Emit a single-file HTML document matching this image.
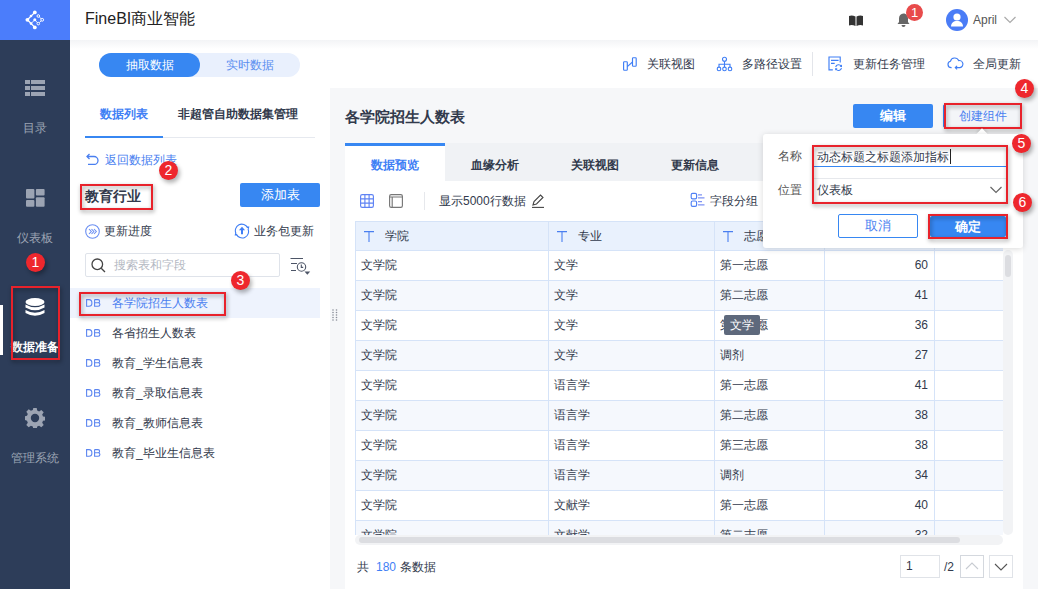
<!DOCTYPE html>
<html><head><meta charset="utf-8">
<style>
*{margin:0;padding:0;box-sizing:border-box}
html,body{width:1038px;height:589px;overflow:hidden;background:#fff;font-family:"Liberation Sans",sans-serif;font-size:12px;color:#323a4c}
.a{position:absolute;white-space:nowrap}
#side{left:0;top:0;width:70px;height:589px;background:#2d3d59}
#logo{left:0;top:0;width:70px;height:40px;background:#4b7dfb}
.sl{color:#9ca4b3;font-size:12px;width:70px;text-align:center;left:0;line-height:14px}
#hdr{left:70px;top:0;width:968px;height:40px;background:#fff}
#shadow{left:70px;top:40px;width:968px;height:9px;background:linear-gradient(#f3f4f6,#fff)}
#rp{left:330px;top:88px;width:708px;height:501px;background:#f6f7f9}
#card{left:345px;top:180px;width:678px;height:409px;background:#fff}
.badge{width:19px;height:19px;border-radius:50%;background:#ee272d;color:#fff;font-size:14px;text-align:center;line-height:19px;box-shadow:2px 3px 4px rgba(0,0,0,.3)}
.rbox{border:2px solid #e8222b;filter:drop-shadow(1px 2px 2px rgba(0,0,0,.4))}
.btn{background:#3787f2;color:#fff;text-align:center;border-radius:2px}
.t12{font-size:12px;line-height:14px}
.j{display:inline-block;text-align-last:justify;text-align:justify;white-space:nowrap}.tofu .k{font-size:1.333em;-webkit-text-stroke:0.28px currentColor}</style></head><body>
<div id="side" class="a"></div>
<div id="logo" class="a">
<svg width="70" height="40" viewBox="0 0 70 40">
<g stroke="#fff" stroke-width="1.3" fill="none">
<path d="M34.8 12.4 L27.4 19.8 L34.8 27.4"></path>
</g>
<g stroke="#fff" stroke-width="0.9" fill="none">
<path d="M31 23.6 L34.8 19.8 L37.3 22.6 M39.3 22.6 L41.2 20.8 M41.2 18.8 L39.3 17"></path>
</g>
<g fill="#fff">
<circle cx="34.8" cy="12.4" r="1.9"></circle><circle cx="27.4" cy="19.8" r="1.9"></circle><circle cx="34.8" cy="27.4" r="1.9"></circle>
<circle cx="34.8" cy="19.8" r="1.5"></circle><circle cx="31" cy="16" r="1.3"></circle><circle cx="31" cy="23.6" r="1.3"></circle>
</g>
<g fill="none" stroke="#fff" stroke-width="1">
<circle cx="38.3" cy="16" r="1.3"></circle><circle cx="42.2" cy="19.8" r="1.4"></circle><circle cx="38.3" cy="23.6" r="1.3"></circle>
</g>
</svg>
</div>
<!-- sidebar items -->
<svg class="a" style="left:25px;top:80px" width="20" height="16" viewBox="0 0 20 16">
<g fill="#9ca4b3"><rect x="0" y="0" width="5" height="4"></rect><rect x="6" y="0" width="14" height="4"></rect>
<rect x="0" y="6" width="5" height="4"></rect><rect x="6" y="6" width="14" height="4"></rect>
<rect x="0" y="12" width="5" height="4"></rect><rect x="6" y="12" width="14" height="4"></rect></g></svg>
<div class="a sl" style="top:121px"><span class="j" style="width: 24px;"><span class="k">目录</span></span></div>
<svg class="a" style="left:26px;top:189px" width="19" height="18" viewBox="0 0 19 18">
<g fill="#9ca4b3"><rect x="0" y="0" width="8.4" height="9.6" rx="1"></rect><rect x="9.9" y="0" width="8.7" height="6.6" rx="1"></rect>
<rect x="0" y="11.1" width="8.4" height="6.7" rx="1"></rect><rect x="9.9" y="8.3" width="8.7" height="9.5" rx="1"></rect></g></svg>
<div class="a sl" style="top:231px"><span class="j" style="width: 36px;"><span class="k">仪表板</span></span></div>
<div class="a badge" style="left:26px;top:253px">1</div>
<div class="a" style="left:0;top:305px;width:3px;height:50px;background:#fff"></div>
<svg class="a" style="left:25px;top:298px" width="20" height="20" viewBox="0 0 20 20">
<g fill="#fff"><ellipse cx="10" cy="4" rx="9.5" ry="4"></ellipse>
<path d="M0.5 6.5 Q10 12 19.5 6.5 L19.5 9.5 Q10 15 0.5 9.5Z"></path>
<path d="M0.5 12 Q10 17.5 19.5 12 L19.5 15 Q10 20.5 0.5 15Z"></path></g></svg>
<div class="a sl" style="top:340px;color:#fff;font-weight:bold"><span class="j" style="width: 48px;"><span class="k">数据准备</span></span></div>
<div class="a rbox" style="left:11px;top:286px;width:49px;height:74px"></div>
<svg class="a" style="left:25px;top:408px" width="20" height="20" viewBox="0 0 20 20">
<path fill="#9ca4b3" fill-rule="evenodd" d="M8.3 0h3.4l.5 2.6 1.9.8 2.2-1.5 2.4 2.4-1.5 2.2.8 1.9 2.6.5v3.4l-2.6.5-.8 1.9 1.5 2.2-2.4 2.4-2.2-1.5-1.9.8-.5 2.6H8.3l-.5-2.6-1.9-.8-2.2 1.5-2.4-2.4 1.5-2.2-.8-1.9L-.6 11.7V8.3l2.6-.5.8-1.9-1.5-2.2 2.4-2.4 2.2 1.5 1.9-.8z M10 5.8a4.2 4.2 0 1 0 0 8.4a4.2 4.2 0 1 0 0-8.4z"></path></svg>
<div class="a sl" style="top:451px"><span class="j" style="width: 48px;"><span class="k">管理系统</span></span></div>

<div id="hdr" class="a"></div>
<div id="shadow" class="a"></div>
<div id="rp" class="a"></div>
<div id="card" class="a"></div>

<!-- header -->
<div class="a" style="left:85px;top:10px;font-size:16px;line-height:18px;color:#222"><span class="j" style="width: 110.25px;">FineBI<span class="k">商业智能</span></span></div>
<svg class="a" style="left:849px;top:15px" width="14" height="11" viewBox="0 0 14 11">
<path fill="#333" d="M0 1 Q3 0 6.5 1.5 L6.5 11 Q3 9.5 0 10.5Z M7.5 1.5 Q11 0 14 1 L14 10.5 Q11 9.5 7.5 11Z"></path></svg>
<svg class="a" style="left:897px;top:13px" width="13" height="14" viewBox="0 0 13 14">
<path fill="#666" d="M6.5 0.5c-2.8 0-4.5 2.2-4.5 4.8v3.7L0.5 11h12L11 9V5.3C11 2.7 9.3 0.5 6.5 0.5z M4.5 12h4a2 2 0 0 1-4 0z"></path></svg>
<div class="a" style="left:906px;top:4px;width:17px;height:17px;border-radius:50%;background:#e84b4b;color:#fff;font-size:13px;line-height:17px;text-align:center">1</div>
<div class="a" style="left:946px;top:9px;width:22px;height:22px;border-radius:50%;background:#4a7cf6"></div>
<svg class="a" style="left:946px;top:9px" width="22" height="22" viewBox="0 0 22 22">
<g fill="#fff"><circle cx="11" cy="8" r="3.6"></circle><path d="M5 17.5c0-3.5 2.5-5.5 6-5.5s6 2 6 5.5z"></path></g></svg>
<div class="a" style="left:973px;top:13px;font-size:12px;line-height:14px;color:#555">April</div>
<svg class="a" style="left:1004px;top:16px" width="12" height="8" viewBox="0 0 12 8"><path d="M0.5 1 L6 6.5 L11.5 1" fill="none" stroke="#aaa" stroke-width="1.2"></path></svg>

<!-- toolbar -->
<div class="a" style="left:99px;top:53px;width:201px;height:24px;border-radius:12px;background:#e9f0fd"></div>
<div class="a" style="left:99px;top:53px;width:101px;height:24px;border-radius:12px;background:#3787f2;color:#fff;text-align:center;line-height:24px"><span class="j" style="width: 48px;"><span class="k">抽取数据</span></span></div>
<div class="a" style="left:200px;top:53px;width:100px;height:24px;color:#5b8ff0;text-align:center;line-height:24px"><span class="j" style="width: 48px;"><span class="k">实时数据</span></span></div>

<svg class="a" style="left:622px;top:56px" width="16" height="16" viewBox="0 0 16 16"><g fill="none" stroke="#3f7ef5" stroke-width="1.15"><rect x="1.6" y="5.7" width="3.7" height="8.5" rx="0.7"></rect><rect x="10.5" y="1.7" width="3.7" height="8.5" rx="0.7"></rect><path d="M5.3 10.6 L10.5 6"></path></g></svg>
<div class="a t12" style="left:647px;top:57px;color:#323a4c"><span class="j" style="width: 48px;"><span class="k">关联视图</span></span></div>
<svg class="a" style="left:716px;top:56px" width="17" height="16" viewBox="0 0 17 16"><g fill="none" stroke="#3f7ef5" stroke-width="1.1"><circle cx="8.5" cy="3.3" r="2"></circle><circle cx="3" cy="12.9" r="1.8"></circle><circle cx="8.5" cy="12.9" r="1.8"></circle><circle cx="14" cy="12.9" r="1.8"></circle><path d="M8.5 5.3V11.1 M3 11.1V8.3H14V11.1"></path></g></svg>
<div class="a t12" style="left:742px;top:57px;color:#323a4c"><span class="j" style="width: 60px;"><span class="k">多路径设置</span></span></div>
<div class="a" style="left:812px;top:52px;width:1px;height:24px;background:#e3e5ea"></div>
<svg class="a" style="left:827px;top:55px" width="17" height="17" viewBox="0 0 17 17"><g fill="none" stroke="#3f7ef5" stroke-width="1.15"><path d="M5.8 14.8H2V2H13.2V7.6"></path><path d="M4 5.4H11.6 M4 8.4H7.7"></path><path d="M8.7 12 A3 3 0 0 1 14.2 11.2 M14.5 13.2 A3 3 0 0 1 9 14"></path></g><path d="M15 9.6 L15 12.2 L12.6 11.6Z M8.2 15.6 L8.2 13 L10.6 13.6Z" fill="#3f7ef5"></path></svg>
<div class="a t12" style="left:853px;top:57px;color:#323a4c"><span class="j" style="width: 72px;"><span class="k">更新任务管理</span></span></div>
<svg class="a" style="left:947px;top:56px" width="18" height="15" viewBox="0 0 18 15"><g fill="none" stroke="#3f7ef5" stroke-width="1.15"><path d="M4.6 11.6H4.2A3.2 3.2 0 0 1 3.4 5.3A4.4 4.4 0 0 1 11.7 4.6A3.4 3.4 0 0 1 13 11.6H8.4"></path><path d="M10.1 9.8L8.3 11.6L10.1 13.4"></path></g></svg>
<div class="a t12" style="left:973px;top:57px;color:#323a4c"><span class="j" style="width: 48px;"><span class="k">全局更新</span></span></div>

<!-- left panel -->
<div class="a t12" style="left:100px;top:107px;color:#3f80f5;font-weight:bold"><span class="j" style="width: 48px;"><span class="k">数据列表</span></span></div>
<div class="a t12" style="left:178px;top:107px;color:#323a4c;font-weight:bold"><span class="j" style="width: 120px;"><span class="k">非超管自助数据集管理</span></span></div>
<div class="a" style="left:85px;top:137px;width:230px;height:1px;background:#e6e9ef"></div>
<div class="a" style="left:85px;top:136px;width:78px;height:2px;background:#3787f2"></div>
<svg class="a" style="left:86px;top:153px" width="13" height="12" viewBox="0 0 13 12"><g fill="none" stroke="#4a7ff0" stroke-width="1.3"><path d="M3.5 1L1 3.5 3.5 6"></path><path d="M1 3.5H8a4 4 0 0 1 0 8H2"></path></g></svg>
<div class="a t12" style="left:105px;top:153px;color:#4a7ff0"><span class="j" style="width: 72px;"><span class="k">返回数据列表</span></span></div>
<div class="a" style="left:85px;top:188px;font-size:14px;line-height:16px;font-weight:bold;color:#323a4c"><span class="j" style="width: 56px;"><span class="k">教育行业</span></span></div>
<div class="a btn" style="left:240px;top:183px;width:80px;height:24px;line-height:24px;font-size:13px"><span class="j" style="width: 39px;"><span class="k">添加表</span></span></div>
<svg class="a" style="left:85px;top:224px" width="15" height="15" viewBox="0 0 15 15"><g fill="none" stroke="#6b8ff2" stroke-width="1.1"><circle cx="7.5" cy="7.5" r="6.8"></circle><path d="M4 5l2.3 2.5L4 10 M6.5 5l2.3 2.5L6.5 10 M9 5l2.3 2.5L9 10"></path></g></svg>
<div class="a t12" style="left:104px;top:224px;color:#323a4c"><span class="j" style="width: 48px;"><span class="k">更新进度</span></span></div>
<svg class="a" style="left:234px;top:223px" width="16" height="16" viewBox="0 0 16 16"><g fill="none" stroke="#3f7ef5" stroke-width="1.1"><path d="M2 10.5A6.3 6.3 0 0 1 13.6 4.8 M14 6A6.3 6.3 0 0 1 2.4 11.2"></path></g><path d="M12.4 3.4L14.6 6.6 15.4 3.6Z M3.6 12.6L1.4 9.4 0.6 12.4Z" fill="#3f7ef5"></path><path d="M8 3.8L4.9 7.2H7V11.2H9V7.2H11.1Z" fill="#3f7ef5"></path></svg>
<div class="a t12" style="left:254px;top:224px;color:#323a4c"><span class="j" style="width: 60px;"><span class="k">业务包更新</span></span></div>
<div class="a" style="left:85px;top:253px;width:195px;height:24px;border:1px solid #dfe3ea;border-radius:2px"></div>
<svg class="a" style="left:91px;top:258px" width="15" height="15" viewBox="0 0 15 15"><g fill="none" stroke="#444" stroke-width="1.3"><circle cx="6.3" cy="6.3" r="5.3"></circle><path d="M10.2 10.2L14 14"></path></g></svg>
<div class="a t12" style="left:114px;top:258px;color:#b3b8c2"><span class="j" style="width: 72px;"><span class="k">搜索表和字段</span></span></div>
<svg class="a" style="left:290px;top:257px" width="21" height="19" viewBox="0 0 21 19"><g fill="none" stroke="#4d5567" stroke-width="1.1"><path d="M0.5 1.5H13 M1 6.5H7 M1 13.5H6"></path><circle cx="11.5" cy="10" r="4.2"></circle><path d="M11.3 7.6V10.4H13.2"></path></g><path d="M14.5 14.5H20.2L17.35 17.8Z" fill="#4d5567"></path></svg>

<div class="a" style="left:70px;top:288px;width:250px;height:30px;background:#eef3fd"></div>
<svg class="a" style="left:86px;top:299px" width="15" height="8" viewBox="0 0 15 8"><path d="M0.6 0.6H3Q5.9 0.6 5.9 3.9Q5.9 7.2 3 7.2H0.6Z M8.6 0.6H12Q13.6 0.6 13.6 2.2Q13.6 3.8 12 3.8H8.6 M8.6 3.8H12.2Q13.9 3.8 13.9 5.5Q13.9 7.2 12.2 7.2H8.6V0.6" fill="none" stroke="#5b85f0" stroke-width="1.1"></path></svg>
<div class="a t12" style="left:112px;top:296px;color:#4a7ff0"><span class="j" style="width: 96px;"><span class="k">各学院招生人数表</span></span></div>
<svg class="a" style="left:86px;top:329px" width="15" height="8" viewBox="0 0 15 8"><path d="M0.6 0.6H3Q5.9 0.6 5.9 3.9Q5.9 7.2 3 7.2H0.6Z M8.6 0.6H12Q13.6 0.6 13.6 2.2Q13.6 3.8 12 3.8H8.6 M8.6 3.8H12.2Q13.9 3.8 13.9 5.5Q13.9 7.2 12.2 7.2H8.6V0.6" fill="none" stroke="#5b85f0" stroke-width="1.1"></path></svg>
<div class="a t12" style="left:112px;top:326px;color:#323a4c"><span class="j" style="width: 84px;"><span class="k">各省招生人数表</span></span></div>
<svg class="a" style="left:86px;top:359px" width="15" height="8" viewBox="0 0 15 8"><path d="M0.6 0.6H3Q5.9 0.6 5.9 3.9Q5.9 7.2 3 7.2H0.6Z M8.6 0.6H12Q13.6 0.6 13.6 2.2Q13.6 3.8 12 3.8H8.6 M8.6 3.8H12.2Q13.9 3.8 13.9 5.5Q13.9 7.2 12.2 7.2H8.6V0.6" fill="none" stroke="#5b85f0" stroke-width="1.1"></path></svg>
<div class="a t12" style="left:112px;top:356px;color:#323a4c"><span class="j" style="width: 90.69px;"><span class="k">教育</span>_<span class="k">学生信息表</span></span></div>
<svg class="a" style="left:86px;top:389px" width="15" height="8" viewBox="0 0 15 8"><path d="M0.6 0.6H3Q5.9 0.6 5.9 3.9Q5.9 7.2 3 7.2H0.6Z M8.6 0.6H12Q13.6 0.6 13.6 2.2Q13.6 3.8 12 3.8H8.6 M8.6 3.8H12.2Q13.9 3.8 13.9 5.5Q13.9 7.2 12.2 7.2H8.6V0.6" fill="none" stroke="#5b85f0" stroke-width="1.1"></path></svg>
<div class="a t12" style="left:112px;top:386px;color:#323a4c"><span class="j" style="width: 90.69px;"><span class="k">教育</span>_<span class="k">录取信息表</span></span></div>
<svg class="a" style="left:86px;top:419px" width="15" height="8" viewBox="0 0 15 8"><path d="M0.6 0.6H3Q5.9 0.6 5.9 3.9Q5.9 7.2 3 7.2H0.6Z M8.6 0.6H12Q13.6 0.6 13.6 2.2Q13.6 3.8 12 3.8H8.6 M8.6 3.8H12.2Q13.9 3.8 13.9 5.5Q13.9 7.2 12.2 7.2H8.6V0.6" fill="none" stroke="#5b85f0" stroke-width="1.1"></path></svg>
<div class="a t12" style="left:112px;top:416px;color:#323a4c"><span class="j" style="width: 90.69px;"><span class="k">教育</span>_<span class="k">教师信息表</span></span></div>
<svg class="a" style="left:86px;top:449px" width="15" height="8" viewBox="0 0 15 8"><path d="M0.6 0.6H3Q5.9 0.6 5.9 3.9Q5.9 7.2 3 7.2H0.6Z M8.6 0.6H12Q13.6 0.6 13.6 2.2Q13.6 3.8 12 3.8H8.6 M8.6 3.8H12.2Q13.9 3.8 13.9 5.5Q13.9 7.2 12.2 7.2H8.6V0.6" fill="none" stroke="#5b85f0" stroke-width="1.1"></path></svg>
<div class="a t12" style="left:112px;top:446px;color:#323a4c"><span class="j" style="width: 102.69px;"><span class="k">教育</span>_<span class="k">毕业生信息表</span></span></div>
<div class="a rbox" style="left:79px;top:292px;width:147px;height:24px"></div>
<div class="a badge" style="left:159px;top:161px">2</div>
<div class="a badge" style="left:231px;top:271px">3</div>
<div class="a rbox" style="left:80px;top:184px;width:73px;height:26px"></div>
<svg class="a" style="left:332px;top:309px" width="6" height="12" viewBox="0 0 6 12"><g fill="#8a8f99"><circle cx="1" cy="1" r=".8"></circle><circle cx="4.5" cy="1" r=".8"></circle><circle cx="1" cy="3.5" r=".8"></circle><circle cx="4.5" cy="3.5" r=".8"></circle><circle cx="1" cy="6" r=".8"></circle><circle cx="4.5" cy="6" r=".8"></circle><circle cx="1" cy="8.5" r=".8"></circle><circle cx="4.5" cy="8.5" r=".8"></circle><circle cx="1" cy="11" r=".8"></circle><circle cx="4.5" cy="11" r=".8"></circle></g></svg>

<!-- right panel -->
<div class="a" style="left:345px;top:108px;font-size:15px;line-height:17px;font-weight:bold;color:#323a4c"><span class="j" style="width: 120px;"><span class="k">各学院招生人数表</span></span></div>
<div class="a btn" style="left:853px;top:104px;width:80px;height:24px;line-height:24px;font-size:13px;font-weight:bold"><span class="j" style="width: 26px;"><span class="k">编辑</span></span></div>
<div class="a" style="left:943px;top:104px;width:79px;height:24px;border:1px solid #3787f2;border-radius:2px;background:#f3f5f8;color:#4a7ff0;text-align:center;line-height:22px;font-size:12px"><span class="j" style="width: 48px;"><span class="k">创建组件</span></span></div>
<div class="a rbox" style="left:944px;top:103px;width:78px;height:26px"></div>
<div class="a badge" style="left:1015px;top:79px">4</div>

<div class="a" style="left:345px;top:143px;width:678px;height:38px;background:#f0f2f5"></div>
<div class="a" style="left:345px;top:143px;width:100px;height:38px;background:#fff;border-top:3px solid #3787f2"></div>
<div class="a t12" style="left:345px;top:158px;width:100px;text-align:center;color:#3f80f5;font-weight:bold"><span class="j" style="width: 48px;"><span class="k">数据预览</span></span></div>
<div class="a t12" style="left:445px;top:158px;width:100px;text-align:center;color:#323a4c;font-weight:bold"><span class="j" style="width: 48px;"><span class="k">血缘分析</span></span></div>
<div class="a t12" style="left:545px;top:158px;width:100px;text-align:center;color:#323a4c;font-weight:bold"><span class="j" style="width: 48px;"><span class="k">关联视图</span></span></div>
<div class="a t12" style="left:645px;top:158px;width:100px;text-align:center;color:#323a4c;font-weight:bold"><span class="j" style="width: 48px;"><span class="k">更新信息</span></span></div>

<svg class="a" style="left:360px;top:194px" width="14" height="14" viewBox="0 0 14 14"><g fill="none" stroke="#5f83f4" stroke-width="1.15"><rect x="0.6" y="0.6" width="12.8" height="12.8" rx="1.6"></rect><path d="M4.9 0.5V13.5 M9.1 0.5V13.5 M0.5 4.9H13.5 M0.5 9.1H13.5"></path></g></svg>
<svg class="a" style="left:389px;top:194px" width="14" height="14" viewBox="0 0 14 14"><g fill="none" stroke="#777" stroke-width="1.15"><rect x="0.6" y="0.6" width="12.8" height="12.8" rx="1.6"></rect><path d="M0.5 3H13.5 M3.2 3V13.5"></path></g></svg>
<div class="a" style="left:424px;top:192px;width:1px;height:18px;background:#e6e8ec"></div>
<div class="a t12" style="left:439px;top:194px;color:#323a4c"><span class="j" style="width: 86.7px;"><span class="k">显示</span>5000<span class="k">行数据</span></span></div>
<svg class="a" style="left:531px;top:194px" width="14" height="14" viewBox="0 0 14 14"><g fill="none" stroke="#444" stroke-width="1.1"><path d="M2 11L3 7.5 9.5 1 12 3.5 5.5 10z"></path><path d="M1 13.4H13"></path></g></svg>
<svg class="a" style="left:690px;top:192px" width="16" height="16" viewBox="0 0 16 16"><g fill="none" stroke="#4f80f5" stroke-width="1.15"><rect x="1.2" y="1.4" width="5.4" height="5.4" rx="1.4"></rect><rect x="1.2" y="9" width="5.4" height="5.4" rx="1.4"></rect></g><g stroke="#7f93f3" stroke-width="1.3"><path d="M8 2.8H12 M8 5.9H14.5 M8 9.6H12 M8 12.8H14.5"></path></g></svg>
<div class="a t12" style="left:710px;top:194px;color:#323a4c"><span class="j" style="width: 48px;"><span class="k">字段分组</span></span></div>

<div class="a" style="left:355px;top:221px;width:648px;height:29px;background:#e9f1fd;border-top:1px solid #d5e3f8;border-left:1px solid #d5e3f8"></div>
<svg class="a" style="left:364px;top:231px" width="10" height="11" viewBox="0 0 10 11"><path d="M0 .6H10 M5 .6V11" stroke="#4a7ff0" stroke-width="1.1" fill="none"></path></svg>
<div class="a t12" style="left:385px;top:229px;color:#323a4c"><span class="j" style="width: 24px;"><span class="k">学院</span></span></div>
<svg class="a" style="left:557px;top:231px" width="10" height="11" viewBox="0 0 10 11"><path d="M0 .6H10 M5 .6V11" stroke="#4a7ff0" stroke-width="1.1" fill="none"></path></svg>
<div class="a t12" style="left:578px;top:229px;color:#323a4c"><span class="j" style="width: 24px;"><span class="k">专业</span></span></div>
<svg class="a" style="left:723px;top:231px" width="10" height="11" viewBox="0 0 10 11"><path d="M0 .6H10 M5 .6V11" stroke="#4a7ff0" stroke-width="1.1" fill="none"></path></svg>
<div class="a t12" style="left:744px;top:229px;color:#323a4c"><span class="j" style="width: 24px;"><span class="k">志愿</span></span></div>
<div class="a" style="left:355px;top:250px;width:648px;height:285px;overflow:hidden">
<div class="a" style="left:0;top:0px;width:648px;height:30px;background:#fff;border-top:1px solid #d5e3f8"></div>
<div class="a t12" style="left:6px;top:8px"><span class="j" style="width: 36px;"><span class="k">文学院</span></span></div>
<div class="a t12" style="left:199px;top:8px"><span class="j" style="width: 24px;"><span class="k">文学</span></span></div>
<div class="a t12" style="left:365px;top:8px"><span class="j" style="width: 48px;"><span class="k">第一志愿</span></span></div>
<div class="a t12" style="left:469px;top:8px;width:104px;text-align:right">60</div>
<div class="a" style="left:0;top:30px;width:648px;height:30px;background:#f5f8fd;border-top:1px solid #d5e3f8"></div>
<div class="a t12" style="left:6px;top:38px"><span class="j" style="width: 36px;"><span class="k">文学院</span></span></div>
<div class="a t12" style="left:199px;top:38px"><span class="j" style="width: 24px;"><span class="k">文学</span></span></div>
<div class="a t12" style="left:365px;top:38px"><span class="j" style="width: 48px;"><span class="k">第二志愿</span></span></div>
<div class="a t12" style="left:469px;top:38px;width:104px;text-align:right">41</div>
<div class="a" style="left:0;top:60px;width:648px;height:30px;background:#fff;border-top:1px solid #d5e3f8"></div>
<div class="a t12" style="left:6px;top:68px"><span class="j" style="width: 36px;"><span class="k">文学院</span></span></div>
<div class="a t12" style="left:199px;top:68px"><span class="j" style="width: 24px;"><span class="k">文学</span></span></div>
<div class="a t12" style="left:365px;top:68px"><span class="j" style="width: 48px;"><span class="k">第三志愿</span></span></div>
<div class="a t12" style="left:469px;top:68px;width:104px;text-align:right">36</div>
<div class="a" style="left:0;top:90px;width:648px;height:30px;background:#f5f8fd;border-top:1px solid #d5e3f8"></div>
<div class="a t12" style="left:6px;top:98px"><span class="j" style="width: 36px;"><span class="k">文学院</span></span></div>
<div class="a t12" style="left:199px;top:98px"><span class="j" style="width: 24px;"><span class="k">文学</span></span></div>
<div class="a t12" style="left:365px;top:98px"><span class="j" style="width: 24px;"><span class="k">调剂</span></span></div>
<div class="a t12" style="left:469px;top:98px;width:104px;text-align:right">27</div>
<div class="a" style="left:0;top:120px;width:648px;height:30px;background:#fff;border-top:1px solid #d5e3f8"></div>
<div class="a t12" style="left:6px;top:128px"><span class="j" style="width: 36px;"><span class="k">文学院</span></span></div>
<div class="a t12" style="left:199px;top:128px"><span class="j" style="width: 36px;"><span class="k">语言学</span></span></div>
<div class="a t12" style="left:365px;top:128px"><span class="j" style="width: 48px;"><span class="k">第一志愿</span></span></div>
<div class="a t12" style="left:469px;top:128px;width:104px;text-align:right">41</div>
<div class="a" style="left:0;top:150px;width:648px;height:30px;background:#f5f8fd;border-top:1px solid #d5e3f8"></div>
<div class="a t12" style="left:6px;top:158px"><span class="j" style="width: 36px;"><span class="k">文学院</span></span></div>
<div class="a t12" style="left:199px;top:158px"><span class="j" style="width: 36px;"><span class="k">语言学</span></span></div>
<div class="a t12" style="left:365px;top:158px"><span class="j" style="width: 48px;"><span class="k">第二志愿</span></span></div>
<div class="a t12" style="left:469px;top:158px;width:104px;text-align:right">38</div>
<div class="a" style="left:0;top:180px;width:648px;height:30px;background:#fff;border-top:1px solid #d5e3f8"></div>
<div class="a t12" style="left:6px;top:188px"><span class="j" style="width: 36px;"><span class="k">文学院</span></span></div>
<div class="a t12" style="left:199px;top:188px"><span class="j" style="width: 36px;"><span class="k">语言学</span></span></div>
<div class="a t12" style="left:365px;top:188px"><span class="j" style="width: 48px;"><span class="k">第三志愿</span></span></div>
<div class="a t12" style="left:469px;top:188px;width:104px;text-align:right">38</div>
<div class="a" style="left:0;top:210px;width:648px;height:30px;background:#f5f8fd;border-top:1px solid #d5e3f8"></div>
<div class="a t12" style="left:6px;top:218px"><span class="j" style="width: 36px;"><span class="k">文学院</span></span></div>
<div class="a t12" style="left:199px;top:218px"><span class="j" style="width: 36px;"><span class="k">语言学</span></span></div>
<div class="a t12" style="left:365px;top:218px"><span class="j" style="width: 24px;"><span class="k">调剂</span></span></div>
<div class="a t12" style="left:469px;top:218px;width:104px;text-align:right">34</div>
<div class="a" style="left:0;top:240px;width:648px;height:30px;background:#fff;border-top:1px solid #d5e3f8"></div>
<div class="a t12" style="left:6px;top:248px"><span class="j" style="width: 36px;"><span class="k">文学院</span></span></div>
<div class="a t12" style="left:199px;top:248px"><span class="j" style="width: 36px;"><span class="k">文献学</span></span></div>
<div class="a t12" style="left:365px;top:248px"><span class="j" style="width: 48px;"><span class="k">第一志愿</span></span></div>
<div class="a t12" style="left:469px;top:248px;width:104px;text-align:right">40</div>
<div class="a" style="left:0;top:270px;width:648px;height:30px;background:#f5f8fd;border-top:1px solid #d5e3f8"></div>
<div class="a t12" style="left:6px;top:278px"><span class="j" style="width: 36px;"><span class="k">文学院</span></span></div>
<div class="a t12" style="left:199px;top:278px"><span class="j" style="width: 36px;"><span class="k">文献学</span></span></div>
<div class="a t12" style="left:365px;top:278px"><span class="j" style="width: 48px;"><span class="k">第二志愿</span></span></div>
<div class="a t12" style="left:469px;top:278px;width:104px;text-align:right">32</div>
<div class="a" style="left:0px;top:0;width:1px;height:300px;background:#d5e3f8"></div>
<div class="a" style="left:193px;top:0;width:1px;height:300px;background:#d5e3f8"></div>
<div class="a" style="left:359px;top:0;width:1px;height:300px;background:#d5e3f8"></div>
<div class="a" style="left:469px;top:0;width:1px;height:300px;background:#d5e3f8"></div>
<div class="a" style="left:579px;top:0;width:1px;height:300px;background:#d5e3f8"></div>
</div>
<div class="a" style="left:548px;top:221px;width:1px;height:29px;background:#d5e3f8"></div>
<div class="a" style="left:714px;top:221px;width:1px;height:29px;background:#d5e3f8"></div>
<div class="a" style="left:824px;top:221px;width:1px;height:29px;background:#d5e3f8"></div>
<div class="a" style="left:934px;top:221px;width:1px;height:29px;background:#d5e3f8"></div>

<div class="a" style="left:1003px;top:250px;width:10px;height:285px;background:#f2f3f5;border-radius:5px"></div>
<div class="a" style="left:1005px;top:255px;width:6px;height:22px;background:#dcdde1;border-radius:3px"></div>
<div class="a" style="left:355px;top:535px;width:648px;height:10px;background:#f2f3f5;border-radius:5px"></div>
<div class="a" style="left:359px;top:537px;width:601px;height:6px;background:#dcdde1;border-radius:3px"></div>

<div class="a t12" style="left:357px;top:560px;color:#323a4c"><span class="j" style="width: 12px;"><span class="k">共</span></span></div><div class="a t12" style="left:376px;top:560px;color:#3f80f5">180</div><div class="a t12" style="left:400px;top:560px;color:#323a4c"><span class="j" style="width: 36px;"><span class="k">条数据</span></span></div>
<div class="a" style="left:900px;top:555px;width:40px;height:23px;border:1px solid #e0e3e8;font-size:12px;line-height:21px;padding-left:5px;color:#323a4c">1</div>
<div class="a t12" style="left:944px;top:560px;color:#323a4c">/2</div>
<div class="a" style="left:960px;top:555px;width:24px;height:23px;border:1px solid #d4d8de"></div>
<svg class="a" style="left:965px;top:562px" width="14" height="8" viewBox="0 0 14 8"><path d="M1 7L7 1 13 7" fill="none" stroke="#c8ccd2" stroke-width="1.1"></path></svg>
<div class="a" style="left:989px;top:555px;width:24px;height:23px;border:1px solid #e0e3e8"></div>
<svg class="a" style="left:994px;top:563px" width="14" height="8" viewBox="0 0 14 8"><path d="M1 1L7 7 13 1" fill="none" stroke="#555" stroke-width="1.1"></path></svg>

<div class="a" style="left:724px;top:315px;width:36px;height:20px;background:#5e697c;border-radius:2px;color:#fff;text-align:center;line-height:20px;font-size:12px"><span class="j" style="width: 24px;"><span class="k">文学</span></span></div>

<!-- popup -->
<div class="a" style="left:978px;top:130px;width:8px;height:8px;background:#fff;transform:rotate(45deg);box-shadow:-1px -1px 3px rgba(0,0,0,.12)"></div>
<div class="a" style="left:763px;top:134px;width:260px;height:114px;background:#fff;border-radius:3px;box-shadow:0 1px 6px rgba(0,0,0,.15)"></div>
<div class="a t12" style="left:778px;top:149px;color:#555"><span class="j" style="width: 24px;"><span class="k">名称</span></span></div>
<div class="a t12" style="left:778px;top:183px;color:#555"><span class="j" style="width: 24px;"><span class="k">位置</span></span></div>
<div class="a t12" style="left:817px;top:150px;color:#323a4c"><span class="j" style="width: 132px;"><span class="k">动态标题之标题添加指标</span></span></div>
<div class="a" style="left:950px;top:149px;width:1px;height:15px;background:#222"></div>
<div class="a" style="left:813px;top:166px;width:193px;height:1px;background:#3787f2"></div>
<div class="a" style="left:813px;top:178px;width:193px;height:1px;background:#e6e8ec"></div>
<div class="a t12" style="left:817px;top:183px;color:#323a4c"><span class="j" style="width: 36px;"><span class="k">仪表板</span></span></div>
<svg class="a" style="left:990px;top:186px" width="12" height="8" viewBox="0 0 12 8"><path d="M0.5 1L6 6.5 11.5 1" fill="none" stroke="#666" stroke-width="1.2"></path></svg>
<div class="a rbox" style="left:812px;top:145px;width:196px;height:59px"></div>
<div class="a" style="left:838px;top:214px;width:80px;height:24px;border:1px solid #3787f2;border-radius:2px;color:#4a7ff0;text-align:center;line-height:22px;font-size:13px"><span class="j" style="width: 26px;"><span class="k">取消</span></span></div>
<div class="a btn" style="left:930px;top:216px;width:76px;height:21px;line-height:21px;font-size:13px;font-weight:bold"><span class="j" style="width: 26px;"><span class="k">确定</span></span></div>
<div class="a rbox" style="left:928px;top:214px;width:80px;height:25px"></div>
<div class="a badge" style="left:1012px;top:134px">5</div>
<div class="a badge" style="left:1013px;top:193px">6</div>

<script>(function(){var s=document.createElement('span');s.style.cssText='position:absolute;left:-9999px;top:0;font-size:40px;white-space:nowrap';s.textContent='\u6570\u636e\u5217\u8868\u6570\u636e\u5217\u8868\u6570\u636e';document.body.appendChild(s);var w=s.getBoundingClientRect().width;document.body.removeChild(s);if(w<360)document.body.className+=' tofu';})();</script></body></html>
